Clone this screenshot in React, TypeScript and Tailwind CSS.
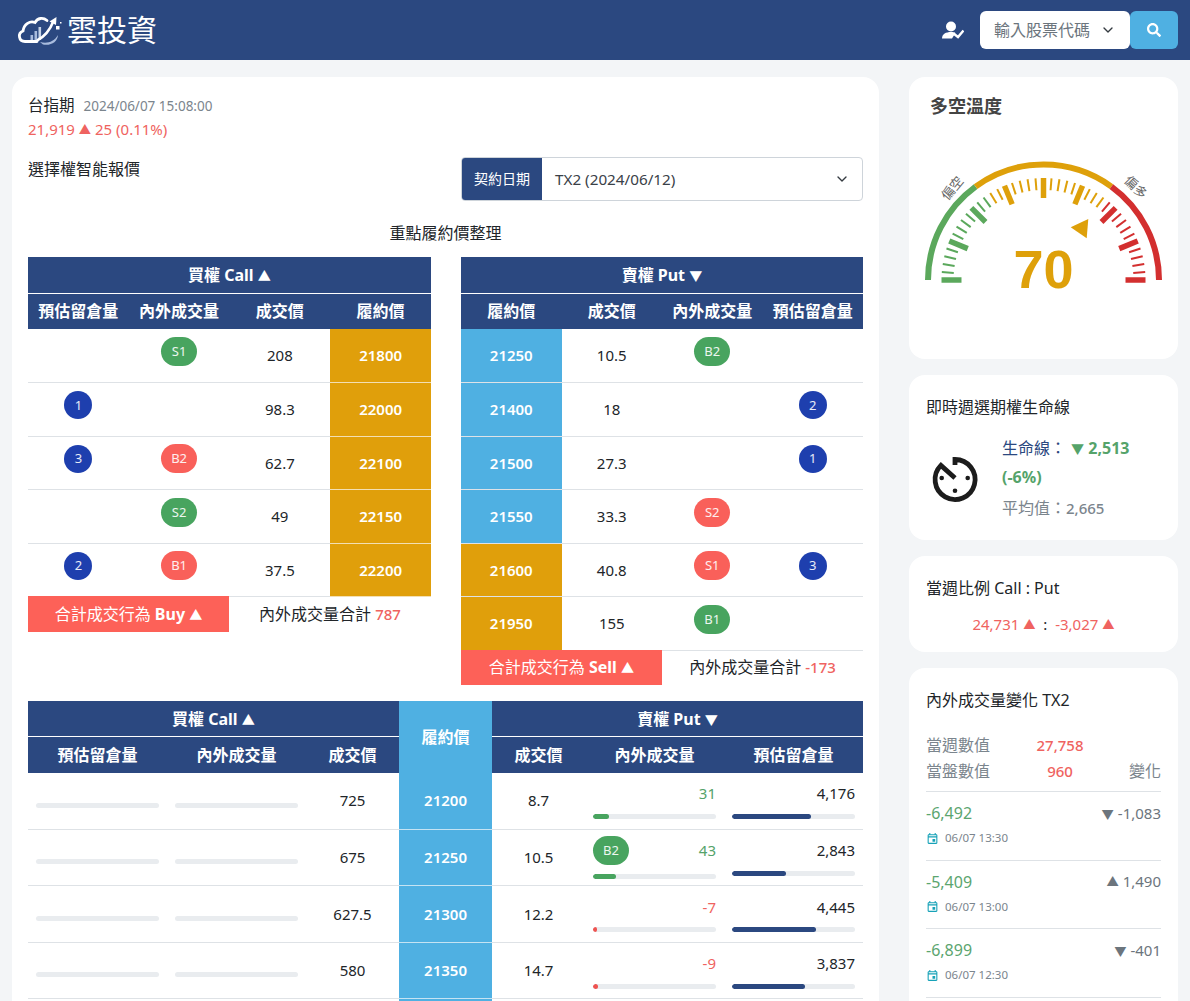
import { ChevronDown } from "lucide-react";
import { FaSearch } from "react-icons/fa";
import { MdOutlineEvent } from "react-icons/md";

type Mark = { text: string; tone: "green" | "red" } | null;

const callRows: { oi: string; mark: Mark; price: string; strike: string }[] = [
  { oi: "", mark: { text: "S1", tone: "green" }, price: "208", strike: "21800" },
  { oi: "1", mark: null, price: "98.3", strike: "22000" },
  { oi: "3", mark: { text: "B2", tone: "red" }, price: "62.7", strike: "22100" },
  { oi: "", mark: { text: "S2", tone: "green" }, price: "49", strike: "22150" },
  { oi: "2", mark: { text: "B1", tone: "red" }, price: "37.5", strike: "22200" },
];

const putRows: { oi: string; mark: Mark; price: string; strike: string; gold?: boolean }[] = [
  { oi: "", mark: { text: "B2", tone: "green" }, price: "10.5", strike: "21250" },
  { oi: "2", mark: null, price: "18", strike: "21400" },
  { oi: "1", mark: null, price: "27.3", strike: "21500" },
  { oi: "", mark: { text: "S2", tone: "red" }, price: "33.3", strike: "21550" },
  { oi: "3", mark: { text: "S1", tone: "red" }, price: "40.8", strike: "21600", gold: true },
  { oi: "", mark: { text: "B1", tone: "green" }, price: "155", strike: "21950", gold: true },
];

const boardRows = [
  { callPrice: "725", strike: "21200", putPrice: "8.7", vol: "31", volPct: 13, up: true, oi: "4,176", oiPct: 64, badge: false },
  { callPrice: "675", strike: "21250", putPrice: "10.5", vol: "43", volPct: 19, up: true, oi: "2,843", oiPct: 44, badge: true },
  { callPrice: "627.5", strike: "21300", putPrice: "12.2", vol: "-7", volPct: 3, up: false, oi: "4,445", oiPct: 68, badge: false },
  { callPrice: "580", strike: "21350", putPrice: "14.7", vol: "-9", volPct: 4, up: false, oi: "3,837", oiPct: 59, badge: false },
];

const history = [
  { value: "-6,492", arrow: "▼", change: "-1,083", time: "06/07 13:30" },
  { value: "-5,409", arrow: "▲", change: "1,490", time: "06/07 13:00" },
  { value: "-6,899", arrow: "▼", change: "-401", time: "06/07 12:30" },
];

function Tri({ down }: { down?: boolean }) {
  return <span className="text-[0.82em]">{down ? "▼" : "▲"}</span>;
}

function Pill({ mark }: { mark: Mark }) {
  if (!mark) return null;
  return (
    <span
      className={`inline-flex h-[29px] w-9 items-center justify-center rounded-full text-[13px] text-white/90 ${
        mark.tone === "green" ? "bg-[#48a45f]" : "bg-[#f9605a]"
      }`}
    >
      {mark.text}
    </span>
  );
}

function Dot({ n }: { n: string }) {
  if (!n) return null;
  return (
    <span className="inline-flex h-7 w-7 items-center justify-center rounded-full bg-[#1e3fae] text-[13px] text-white/90">
      {n}
    </span>
  );
}

function Logo() {
  return (
    <svg width="60" height="44" viewBox="0 0 60 44" fill="none" className="shrink-0">
      <path d="M27 33.5H15C8.5 33.5 7.5 25 13 23C14 16 20 12.5 25 14.5C27.5 10 33 9 37 12.5" stroke="white" strokeWidth="2.8" strokeLinecap="round" />
      <rect x="20.5" y="27" width="2.6" height="5" fill="#a9bcdd" />
      <rect x="24.5" y="23" width="2.6" height="9" fill="#a9bcdd" />
      <rect x="28.5" y="19" width="2.6" height="13" fill="#c6d3e8" />
      <path d="M27 32.5C34 29 40 22 43.5 13" stroke="white" strokeWidth="2.6" />
      <path d="M39.5 13.5L46.5 9L46 17Z" fill="white" />
      <path d="M30 34C37 36 44 34 48 27C47.5 34 41 38 33 36.5Z" fill="#a9bcdd" />
      <rect x="46" y="18" width="3.5" height="3.5" fill="white" />
      <rect x="50" y="14" width="1.5" height="1.5" fill="white" />
    </svg>
  );
}

function UserCheck() {
  return (
    <svg width="22" height="18" viewBox="0 0 22 18" className="mr-[16px] shrink-0">
      <circle cx="9" cy="5.5" r="5" fill="white" />
      <path d="M0 17.5C0 13 4 11 9 11C11 11 12.5 11.4 13.5 12L10 17.5Z" fill="white" />
      <path d="M11.5 12.5L16 16L21.5 9.5" stroke="white" strokeWidth="2.4" fill="none" />
    </svg>
  );
}

function Gauge() {
  const cx = 1043.5;
  const cy = 280;
  const at = (deg: number, r: number) => {
    const a = (deg * Math.PI) / 180;
    return [cx - r * Math.cos(a), cy - r * Math.sin(a)];
  };
  const arc = (from: number, to: number) => {
    const [x1, y1] = at(from, 115.5);
    const [x2, y2] = at(to, 115.5);
    return `M${x1} ${y1}A115.5 115.5 0 0 1 ${x2} ${y2}`;
  };
  const ticks = Array.from({ length: 41 }, (_, i) => i);
  return (
    <svg viewBox="909 130 269 170" width="269" height="170" className="block">
      <path d={arc(0, 54)} stroke="#5ba85c" strokeWidth="6" fill="none" />
      <path d={arc(54, 126)} stroke="#dea00a" strokeWidth="6" fill="none" />
      <path d={arc(126, 180)} stroke="#d32f2f" strokeWidth="6" fill="none" />
      {ticks.map((i) => {
        const major = i % 5 === 0;
        const [x1, y1] = at(i * 4.5, major ? 82 : 90);
        const [x2, y2] = at(i * 4.5, 102);
        const color = i <= 12 ? "#5ba85c" : i <= 28 ? "#dea00a" : "#d32f2f";
        return <line key={i} x1={x1} y1={y1} x2={x2} y2={y2} stroke={color} strokeWidth={major ? 5.5 : 2} />;
      })}
      <path d="M1070.7 227.3L1088.3 219L1086.7 238.3Z" fill="#dea00a" />
      <text x="1043.5" y="288" textAnchor="middle" fontSize="54" fontWeight="700" fill="#dea00a" fontFamily="'Liberation Sans', sans-serif">
        70
      </text>
      <text x="952" y="193" textAnchor="middle" fontSize="13" fill="#666" transform="rotate(-50 952 188)">
        偏空
      </text>
      <text x="1136" y="192" textAnchor="middle" fontSize="13" fill="#666" transform="rotate(45 1136 187)">
        偏多
      </text>
    </svg>
  );
}

function LifeIcon() {
  return (
    <svg width="60" height="56" viewBox="0 0 60 56" fill="none" className="shrink-0">
      <path d="M30 15V9.5A20 20 0 1 1 15.9 15.4L30 28" stroke="#1c1c1c" strokeWidth="4.8" />
      <circle cx="16.7" cy="28" r="2.3" fill="#1c1c1c" />
      <circle cx="42.7" cy="28" r="2.3" fill="#1c1c1c" />
      <circle cx="30" cy="40.7" r="2.3" fill="#1c1c1c" />
    </svg>
  );
}

function Track({ pct, color }: { pct: number; color: string }) {
  return (
    <div className="mt-[9px] h-[5px] w-full overflow-hidden rounded-full bg-[#e9ecef]">
      <div className={`h-full rounded-full ${color}`} style={{ width: `${pct}%` }} />
    </div>
  );
}

export default function App() {
  return (
    <div className="h-[1001px] overflow-hidden bg-[#f3f5f7] font-['Noto_Sans','Noto_Sans_CJK_TC',sans-serif] text-base text-[#212529]">
      {/* Header */}
      <header className="flex h-[60px] items-center justify-between bg-[#2b4880] pl-[10px] pr-3">
        <div className="flex items-center">
          <Logo />
          <span className="-ml-[3px] text-[30px] leading-none text-white">雲投資</span>
        </div>
        <div className="flex items-center">
          <UserCheck />
          <div className="flex h-[38px] w-[150px] items-center justify-between rounded-md bg-white px-[14px] text-[#6c757d]">
            <span>輸入股票代碼</span>
            <ChevronDown size={16} strokeWidth={2} className="text-[#343a40]" />
          </div>
          <button className="flex h-[38px] w-12 items-center justify-center rounded-md bg-[#4fb0e2] text-white">
            <FaSearch size={14} />
          </button>
        </div>
      </header>

      <main className="flex items-start gap-[30px] px-3 pt-[17px]">
        {/* Left */}
        <section className="w-[867px] rounded-2xl bg-white px-4 pb-4 pt-[17px]">
          <div className="flex h-6 items-center gap-[9px]">
            <span className="text-[15.5px]">台指期</span>
            <span className="text-[13.5px] text-[#7b858d]">2024/06/07 15:08:00</span>
          </div>
          <div className="-mt-px h-6 text-[15px] leading-6 text-[#ef6360]">
            21,919 <Tri /> 25 (0.11%)
          </div>

          <div className="mt-4 flex items-start justify-between">
            <span>選擇權智能報價</span>
            <div className="flex h-[44px] w-[402px] overflow-hidden rounded border border-[#ced4da]">
              <span className="flex w-[80px] items-center justify-center bg-[#2b4880] text-sm text-white">契約日期</span>
              <div className="flex flex-1 items-center justify-between pl-[13px] pr-3 text-[15.25px] text-[#3a4148]">
                <span>TX2 (2024/06/12)</span>
                <ChevronDown size={16} strokeWidth={2} className="text-[#343a40]" />
              </div>
            </div>
          </div>

          <div className="mt-[20px] h-6 text-center leading-6">重點履約價整理</div>

          {/* Key strikes */}
          <div className="mt-3 flex items-start gap-[30px]">
            <div className="w-[403px]">
              <table className="w-full table-fixed border-collapse text-center">
                <thead className="bg-[#2b4880] text-white">
                  <tr className="h-9 border-b border-white">
                    <th colSpan={4} className="font-bold">買權 Call <Tri /></th>
                  </tr>
                  <tr className="h-9">
                    <th className="font-bold">預估留倉量</th>
                    <th className="font-bold">內外成交量</th>
                    <th className="font-bold">成交價</th>
                    <th className="font-bold">履約價</th>
                  </tr>
                </thead>
                <tbody>
                  {callRows.map((r) => (
                    <tr key={r.strike} className="h-[53.5px] border-b border-[#dee2e6]">
                      <td className="align-middle"><span className="relative -top-[4px] inline-flex"><Dot n={r.oi} /></span></td>
                      <td className="align-middle"><span className="relative -top-[4px] inline-flex"><Pill mark={r.mark} /></span></td>
                      <td className="text-[15px]">{r.price}</td>
                      <td className="border-b border-[#f2dfb5] bg-[#e09f0b] text-[15px] font-semibold text-white">{r.strike}</td>
                    </tr>
                  ))}
                </tbody>
              </table>
              <div className="-mt-px flex h-9 items-center">
                <div className="flex h-full w-[201px] items-center justify-center bg-[#fd6158] text-white">
                  合計成交行為&nbsp;<span className="font-bold">Buy <Tri /></span>
                </div>
                <div className="flex-1 text-center">
                  內外成交量合計 <span className="text-[15px] font-medium text-[#ef6360]">787</span>
                </div>
              </div>
            </div>

            <div className="w-[402px]">
              <table className="w-full table-fixed border-collapse text-center">
                <thead className="bg-[#2b4880] text-white">
                  <tr className="h-9 border-b border-white">
                    <th colSpan={4} className="font-bold">賣權 Put <Tri down /></th>
                  </tr>
                  <tr className="h-9">
                    <th className="font-bold">履約價</th>
                    <th className="font-bold">成交價</th>
                    <th className="font-bold">內外成交量</th>
                    <th className="font-bold">預估留倉量</th>
                  </tr>
                </thead>
                <tbody>
                  {putRows.map((r) => (
                    <tr key={r.strike} className="h-[53.5px] border-b border-[#dee2e6]">
                      <td className={`text-[15px] font-semibold text-white ${r.gold ? "bg-[#e09f0b]" : "bg-[#4fb0e2]"}`}>{r.strike}</td>
                      <td className="text-[15px]">{r.price}</td>
                      <td className="align-middle"><span className="relative -top-[4px] inline-flex"><Pill mark={r.mark} /></span></td>
                      <td className="align-middle"><span className="relative -top-[4px] inline-flex"><Dot n={r.oi} /></span></td>
                    </tr>
                  ))}
                </tbody>
              </table>
              <div className="-mt-px flex h-[35px] items-center">
                <div className="flex h-full w-[201px] items-center justify-center bg-[#fd6158] text-white">
                  合計成交行為&nbsp;<span className="font-bold">Sell <Tri /></span>
                </div>
                <div className="flex-1 text-center">
                  內外成交量合計 <span className="text-[15px] font-medium text-[#ef6360]">-173</span>
                </div>
              </div>
            </div>
          </div>

          {/* Full board */}
          <table className="mt-4 w-full table-fixed border-collapse text-center">
            <colgroup>
              <col className="w-[139px]" />
              <col className="w-[139px]" />
              <col className="w-[93px]" />
              <col className="w-[93px]" />
              <col className="w-[93px]" />
              <col className="w-[139px]" />
              <col className="w-[139px]" />
            </colgroup>
            <thead className="bg-[#2b4880] text-white">
              <tr className="h-9 border-b border-white">
                <th colSpan={3} className="pt-[2px] font-bold">買權 Call <Tri /></th>
                <th rowSpan={2} className="bg-[#4fb0e2] font-bold">履約價</th>
                <th colSpan={3} className="pt-[2px] font-bold">賣權 Put <Tri down /></th>
              </tr>
              <tr className="h-9">
                <th className="font-bold">預估留倉量</th>
                <th className="font-bold">內外成交量</th>
                <th className="font-bold">成交價</th>
                <th className="font-bold">成交價</th>
                <th className="font-bold">內外成交量</th>
                <th className="font-bold">預估留倉量</th>
              </tr>
            </thead>
            <tbody>
              {boardRows.map((r) => (
                <tr key={r.strike} className="h-[56.5px] border-b border-[#dee2e6]">
                  <td className="px-2"><Track pct={0} color="bg-[#2b4880]" /></td>
                  <td className="px-2"><Track pct={0} color="bg-[#48a45f]" /></td>
                  <td className="text-[15px]">{r.callPrice}</td>
                  <td className="border-b border-[#c5e3f3] bg-[#4fb0e2] text-[15px] font-semibold text-white">{r.strike}</td>
                  <td className="text-[15px]">{r.putPrice}</td>
                  <td className="px-2">
                    <div className="flex items-center justify-between text-[15px]">
                      {r.badge ? <Pill mark={{ text: "B2", tone: "green" }} /> : <span />}
                      <span className={r.up ? "text-[#55a36a]" : "text-[#ef6360]"}>{r.vol}</span>
                    </div>
                    <Track pct={r.volPct} color={r.up ? "bg-[#48a45f]" : "bg-[#ef5350]"} />
                  </td>
                  <td className="px-2">
                    <div className="text-right text-[15px]">{r.oi}</div>
                    <Track pct={r.oiPct} color="bg-[#2b4880]" />
                  </td>
                </tr>
              ))}
              <tr className="h-[56.5px]">
                <td colSpan={3} />
                <td className="bg-[#4fb0e2]" />
                <td colSpan={3} />
              </tr>
            </tbody>
          </table>
        </section>

        {/* Right */}
        <aside className="flex w-[269px] flex-col gap-4">
          <div className="h-[282px] rounded-2xl bg-white">
            <h2 className="pl-[21px] pt-4 text-lg font-bold leading-[26px] text-[#444]">多空溫度</h2>
            <div className="mt-[11px]">
              <Gauge />
            </div>
          </div>

          <div className="h-[165px] rounded-2xl bg-white px-[17px] pt-5">
            <h3 className="leading-6">即時週選期權生命線</h3>
            <div className="mt-[15px] flex items-start">
              <div className="-ml-[1px] mt-4">
                <LifeIcon />
              </div>
              <div className="ml-[17px] w-[160px] leading-7">
                <div>
                  <span className="text-[#2b4880]">生命線：</span>
                  <span className="ml-[5px] font-bold text-[#55a36a]"><Tri down /> 2,513</span>
                </div>
                <div className="font-bold text-[#55a36a]">(-6%)</div>
                <div className="mt-[3px] text-[#7b858d]">
                  平均值：<span className="text-[15px] font-medium">2,665</span>
                </div>
              </div>
            </div>
          </div>

          <div className="h-[96px] rounded-2xl bg-white px-[17px] pt-5">
            <h3 className="leading-6">當週比例 Call : Put</h3>
            <div className="mt-3 text-center text-[15px] leading-6 text-[#ef6360]">
              24,731 <Tri /> <span className="text-[#212529]">&nbsp;:&nbsp;</span> -3,027 <Tri />
            </div>
          </div>

          <div className="rounded-2xl bg-white px-[17px] pb-10 pt-5">
            <h3 className="leading-6">內外成交量變化 TX2</h3>
            <div className="mt-5 flex h-[26px] items-center text-[#7b858d]">
              <span className="w-[94px]">當週數值</span>
              <span className="w-[80px] text-center text-[15px] font-medium text-[#ef6360]">27,758</span>
            </div>
            <div className="flex h-[26px] items-center text-[#7b858d]">
              <span className="w-[94px]">當盤數值</span>
              <span className="w-[80px] text-center text-[15px] font-medium text-[#ef6360]">960</span>
              <span className="ml-auto">變化</span>
            </div>
            <div className="mt-[7px] border-t border-[#dee2e6]">
              {history.map((h) => (
                <div key={h.time} className="h-[68.5px] border-b border-[#dee2e6] pt-[9px]">
                  <div className="flex h-6 items-center justify-between text-[15px]">
                    <span className="text-base text-[#5ba56f]">{h.value}</span>
                    <span className="text-[#6c757d]">
                      <Tri down={h.arrow === "▼"} /> {h.change}
                    </span>
                  </div>
                  <div className="mt-[1px] flex h-6 items-center gap-[6px] text-[11.5px] text-[#7b858d]">
                    <MdOutlineEvent size={13} className="text-[#17a2b8]" />
                    {h.time}
                  </div>
                </div>
              ))}
            </div>
          </div>
        </aside>
      </main>
    </div>
  );
}
